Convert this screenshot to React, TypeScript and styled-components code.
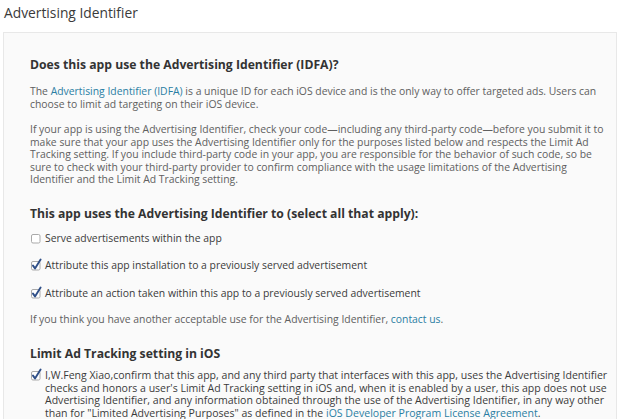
import * as React from "react";
import styled, { createGlobalStyle } from "styled-components";

const GlobalStyle = createGlobalStyle`
  html, body {
    margin: 0;
    padding: 0;
    background: #ffffff;
    overflow: hidden;
  }
  body {
    font-family: "Open Sans", "DejaVu Sans", sans-serif;
    color: #555;
  }
`;

const Page = styled.div`
  width: 619px;
  height: 419px;
  overflow: hidden;
`;

const PageTitle = styled.h1`
  margin: 0;
  padding: 4px 4px 0 4px;
  height: 32px;
  box-sizing: border-box;
  font-size: 13.8px;
  line-height: 18px;
  font-weight: normal;
  color: #3a3a3a;
`;

const Panel = styled.div`
  margin: 0 2px 0 3px;
  border: 1px solid #e8e8e8;
  background: #fafafa;
  padding: 24px 10px 20px 26px;
  box-sizing: border-box;
  height: 420px;
`;

const Heading = styled.h2<{ $top?: number; $bottom?: number }>`
  margin: ${p => p.$top ?? 0}px 0 ${p => p.$bottom ?? 10}px 0;
  font-size: 12.2px;
  line-height: 16px;
  font-weight: bold;
  color: #333;
  white-space: nowrap;
`;

const Para = styled.p<{ $top?: number; $bottom?: number }>`
  margin: ${p => p.$top ?? 0}px 0 ${p => p.$bottom ?? 0}px 0;
  font-size: 10.4px;
  line-height: 12.5px;
  color: #606060;
  white-space: nowrap;
`;

const Link = styled.a`
  color: #2a7ea3;
  text-decoration: none;
`;

const OptionList = styled.div`
  display: flex;
  flex-direction: column;
  gap: 15px;
`;

const Option = styled.label<{ $size?: number }>`
  display: flex;
  align-items: flex-start;
  gap: 5px;
  font-size: ${p => p.$size ?? 10.4}px;
  line-height: 12.6px;
  color: #3a3a3a;
  white-space: nowrap;
`;

const BoxWrap = styled.span`
  flex: 0 0 9px;
  width: 9px;
  height: 9px;
  margin: 2px 0 0 1px;
  position: relative;
`;

const BoxSvg = styled.svg`
  position: absolute;
  left: 0;
  top: -3px;
`;

const Check = ({ checked }: { checked: boolean }) => (
  <BoxWrap>
    <BoxSvg width="12" height="13" viewBox="0 0 12 13">
      <rect x="0.5" y="3.5" width="8.5" height="8.5" rx="1.5" fill="#fff" stroke="#a9a9a9" />
      {checked && (
        <path
          d="M2 7.6 L4 10.4 L9.6 1.6"
          fill="none"
          stroke="#2f4f88"
          strokeWidth="1.9"
          strokeLinecap="round"
          strokeLinejoin="round"
        />
      )}
    </BoxSvg>
  </BoxWrap>
);

const OptionText = styled.span``;

export default function App() {
  return (
    <Page>
      <GlobalStyle />
      <PageTitle>Advertising Identifier</PageTitle>
      <Panel>
        <Heading $bottom={12}>Does this app use the Advertising Identifier (IDFA)?</Heading>
        <Para $bottom={13}>
          The <Link>Advertising Identifier (IDFA)</Link> is a unique ID for each iOS device and is the only way to
          offer targeted ads. Users can
          <br />
          choose to limit ad targeting on their iOS device.
        </Para>
        <Para>
          If your app is using the Advertising Identifier, check your code—including any third-party code—before you
          submit it to
          <br />
          make sure that your app uses the Advertising Identifier only for the purposes listed below and respects the
          Limit Ad
          <br />
          Tracking setting. If you include third-party code in your app, you are responsible for the behavior of such
          code, so be
          <br />
          sure to check with your third-party provider to confirm compliance with the usage limitations of the
          Advertising
          <br />
          Identifier and the Limit Ad Tracking setting.
        </Para>
        <Heading $top={20} $bottom={10}>
          This app uses the Advertising Identifier to (select all that apply):
        </Heading>
        <OptionList>
          <Option>
            <Check checked={false} />
            <OptionText>Serve advertisements within the app</OptionText>
          </Option>
          <Option>
            <Check checked />
            <OptionText>Attribute this app installation to a previously served advertisement</OptionText>
          </Option>
          <Option>
            <Check checked />
            <OptionText>Attribute an action taken within this app to a previously served advertisement</OptionText>
          </Option>
        </OptionList>
        <Para $top={13.5}>
          If you think you have another acceptable use for the Advertising Identifier, <Link>contact us</Link>.
        </Para>
        <Heading $top={21} $bottom={7}>
          Limit Ad Tracking setting in iOS
        </Heading>
        <Option $size={10.55}>
          <Check checked />
          <OptionText>
            I,W.Feng Xiao,confirm that this app, and any third party that interfaces with this app, uses the
            Advertising Identifier
            <br />
            checks and honors a user's Limit Ad Tracking setting in iOS and, when it is enabled by a user, this app
            does not use
            <br />
            Advertising Identifier, and any information obtained through the use of the Advertising Identifier, in any
            way other
            <br />
            than for "Limited Advertising Purposes" as defined in the <Link>iOS Developer Program License Agreement</Link>.
          </OptionText>
        </Option>
      </Panel>
    </Page>
  );
}
